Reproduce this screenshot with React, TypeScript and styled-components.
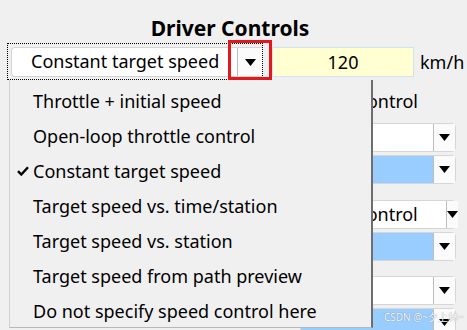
import React from "react";
import styled, { createGlobalStyle } from "styled-components";

const Global = createGlobalStyle`
  html, body { margin: 0; padding: 0; background: #f0f0f0; }
  body { font-family: "Noto Sans", "Open Sans", sans-serif; color: #000; }
`;

const Page = styled.div`
  position: relative;
  width: 467px;
  height: 330px;
  overflow: hidden;
  background: #f0f0f0;
`;

const Title = styled.div`
  width: 460px;
  padding-top: 13px;
  height: 30px;
  text-align: center;
  font-weight: 700;
  font-size: 21px;
  line-height: 30px;
`;

const ControlRow = styled.div`
  display: flex;
  align-items: center;
  height: 37px;
  padding-left: 7px;
`;

const FocusFrame = styled.div`
  position: relative;
  box-sizing: border-box;
  width: 256px;
  height: 37px;
  border: 1px dotted #000;
  padding: 3px 0 2px 3px;
  display: flex;
`;

const ComboBox = styled.div`
  box-sizing: border-box;
  display: flex;
  height: 100%;
  flex: 1;
  border: 1px solid #d4d4d4;
  border-right: none;
  border-radius: 4px 0 0 4px;
  background: #fff;
  overflow: hidden;
`;

const ComboText = styled.div`
  flex: 1;
  padding-left: 19px;
  font-size: 18px;
  line-height: 27px;
  white-space: nowrap;
`;

const ArrowButton = styled.div<{ $w: number }>`
  box-sizing: border-box;
  width: ${(p) => p.$w}px;
  border-left: 1px solid #bdbdbd;
  background: #fbfbfb;
  display: flex;
  align-items: center;
  justify-content: center;
`;

const Arrow = () => (
  <svg width="11" height="7" viewBox="0 0 11 7">
    <path d="M0 0 H11 L5.5 7 Z" fill="#000" />
  </svg>
);

const RedMark = styled.div`
  position: absolute;
  left: 220px;
  top: -4px;
  width: 44px;
  height: 40px;
  box-sizing: border-box;
  border: 3px solid #e4171d;
`;

const NumberInput = styled.div`
  box-sizing: border-box;
  margin-left: 9px;
  width: 142px;
  height: 30px;
  margin-top: 1px;
  background: #ffffd2;
  border: 1px solid #cfe3f3;
  text-align: center;
  font-size: 18px;
  line-height: 28px;
`;

const Unit = styled.div`
  margin-left: 6px;
  font-size: 18px;
  line-height: 30px;
  white-space: nowrap;
`;

const RightPanel = styled.div`
  margin-left: 300px;
  width: 156px;
  display: flex;
  flex-direction: column;
`;

const PanelLabel = styled.div`
  height: 30px;
  margin-top: 6px;
  padding-right: 38px;
  text-align: right;
  font-size: 18px;
  line-height: 30px;
  white-space: nowrap;
`;

const Group = styled.div<{ $top: number }>`
  margin-top: ${(p) => p.$top}px;
  display: flex;
  flex-direction: column;
  gap: 3px;
`;

const SideCombo = styled.div`
  box-sizing: border-box;
  height: 29px;
  display: flex;
  border: 1px solid #d6d6d6;
  border-radius: 4px;
  background: #fff;
`;

const SideField = styled.div<{ $fill: string }>`
  flex: 1;
  background: ${(p) => p.$fill};
  border-radius: 4px 0 0 4px;
  font-size: 18px;
  line-height: 26px;
  text-align: right;
  padding-right: 28px;
  white-space: nowrap;
`;

const Menu = styled.div`
  position: absolute;
  left: 9px;
  top: 80px;
  width: 364px;
  height: 248px;
  box-sizing: border-box;
  background: #f0f0f0;
  border-left: 1px solid #d0d0d0;
  border-bottom: 1px solid #b8b8b8;
  border-right: 2px solid #6e6e6e;
  padding-top: 4px;
`;

const MenuItem = styled.div`
  position: relative;
  height: 35px;
  padding-left: 23px;
  font-size: 18px;
  line-height: 35px;
  white-space: nowrap;
`;

const Check = styled.span`
  position: absolute;
  left: 7px;
  top: 12px;
  display: flex;
`;

const Watermark = styled.div`
  position: absolute;
  left: 384px;
  top: 310px;
  font-family: "Noto Sans", "Noto Sans CJK SC", sans-serif;
  font-size: 10px;
  line-height: 14px;
  color: #f4f6fa;
  text-shadow: 0 0 1px rgba(60, 60, 60, 0.55);
  white-space: nowrap;
`;

const items = [
  "Throttle + initial speed",
  "Open-loop throttle control",
  "Constant target speed",
  "Target speed vs. time/station",
  "Target speed vs. station",
  "Target speed from path preview",
  "Do not specify speed control here",
];

const groups: { top: number; rows: { fill: string; text?: string }[] }[] = [
  { top: 7, rows: [{ fill: "#fff" }, { fill: "#99ccff" }] },
  { top: 16, rows: [{ fill: "#fff", text: "Speed control" }, { fill: "#99ccff" }] },
  { top: 15, rows: [{ fill: "#fff" }, { fill: "#99ccff" }] },
];

export default function App() {
  return (
    <Page>
      <Global />
      <Title>Driver Controls</Title>
      <ControlRow>
        <FocusFrame>
          <ComboBox>
            <ComboText>Constant target speed</ComboText>
            <ArrowButton $w={25}>
              <Arrow />
            </ArrowButton>
          </ComboBox>
          <RedMark />
        </FocusFrame>
        <NumberInput>120</NumberInput>
        <Unit>km/h</Unit>
      </ControlRow>
      <RightPanel>
        <PanelLabel>Speed control</PanelLabel>
        {groups.map((g, gi) => (
          <Group key={gi} $top={g.top}>
            {g.rows.map((r, ri) => (
              <SideCombo key={ri}>
                <SideField $fill={r.fill}>{r.text ?? ""}</SideField>
                <ArrowButton $w={22}>
                  <Arrow />
                </ArrowButton>
              </SideCombo>
            ))}
          </Group>
        ))}
      </RightPanel>
      <Menu>
        {items.map((t, i) => (
          <MenuItem key={t}>
            {i === 2 && (
              <Check>
                <svg width="12" height="10" viewBox="0 0 12 10">
                  <path d="M1 5.2 L4.3 8.5 L11 1.2" fill="none" stroke="#000" strokeWidth="2.4" strokeLinejoin="miter" />
                </svg>
              </Check>
            )}
            {t}
          </MenuItem>
        ))}
      </Menu>
      <Watermark>CSDN @~夕上林~</Watermark>
    </Page>
  );
}
